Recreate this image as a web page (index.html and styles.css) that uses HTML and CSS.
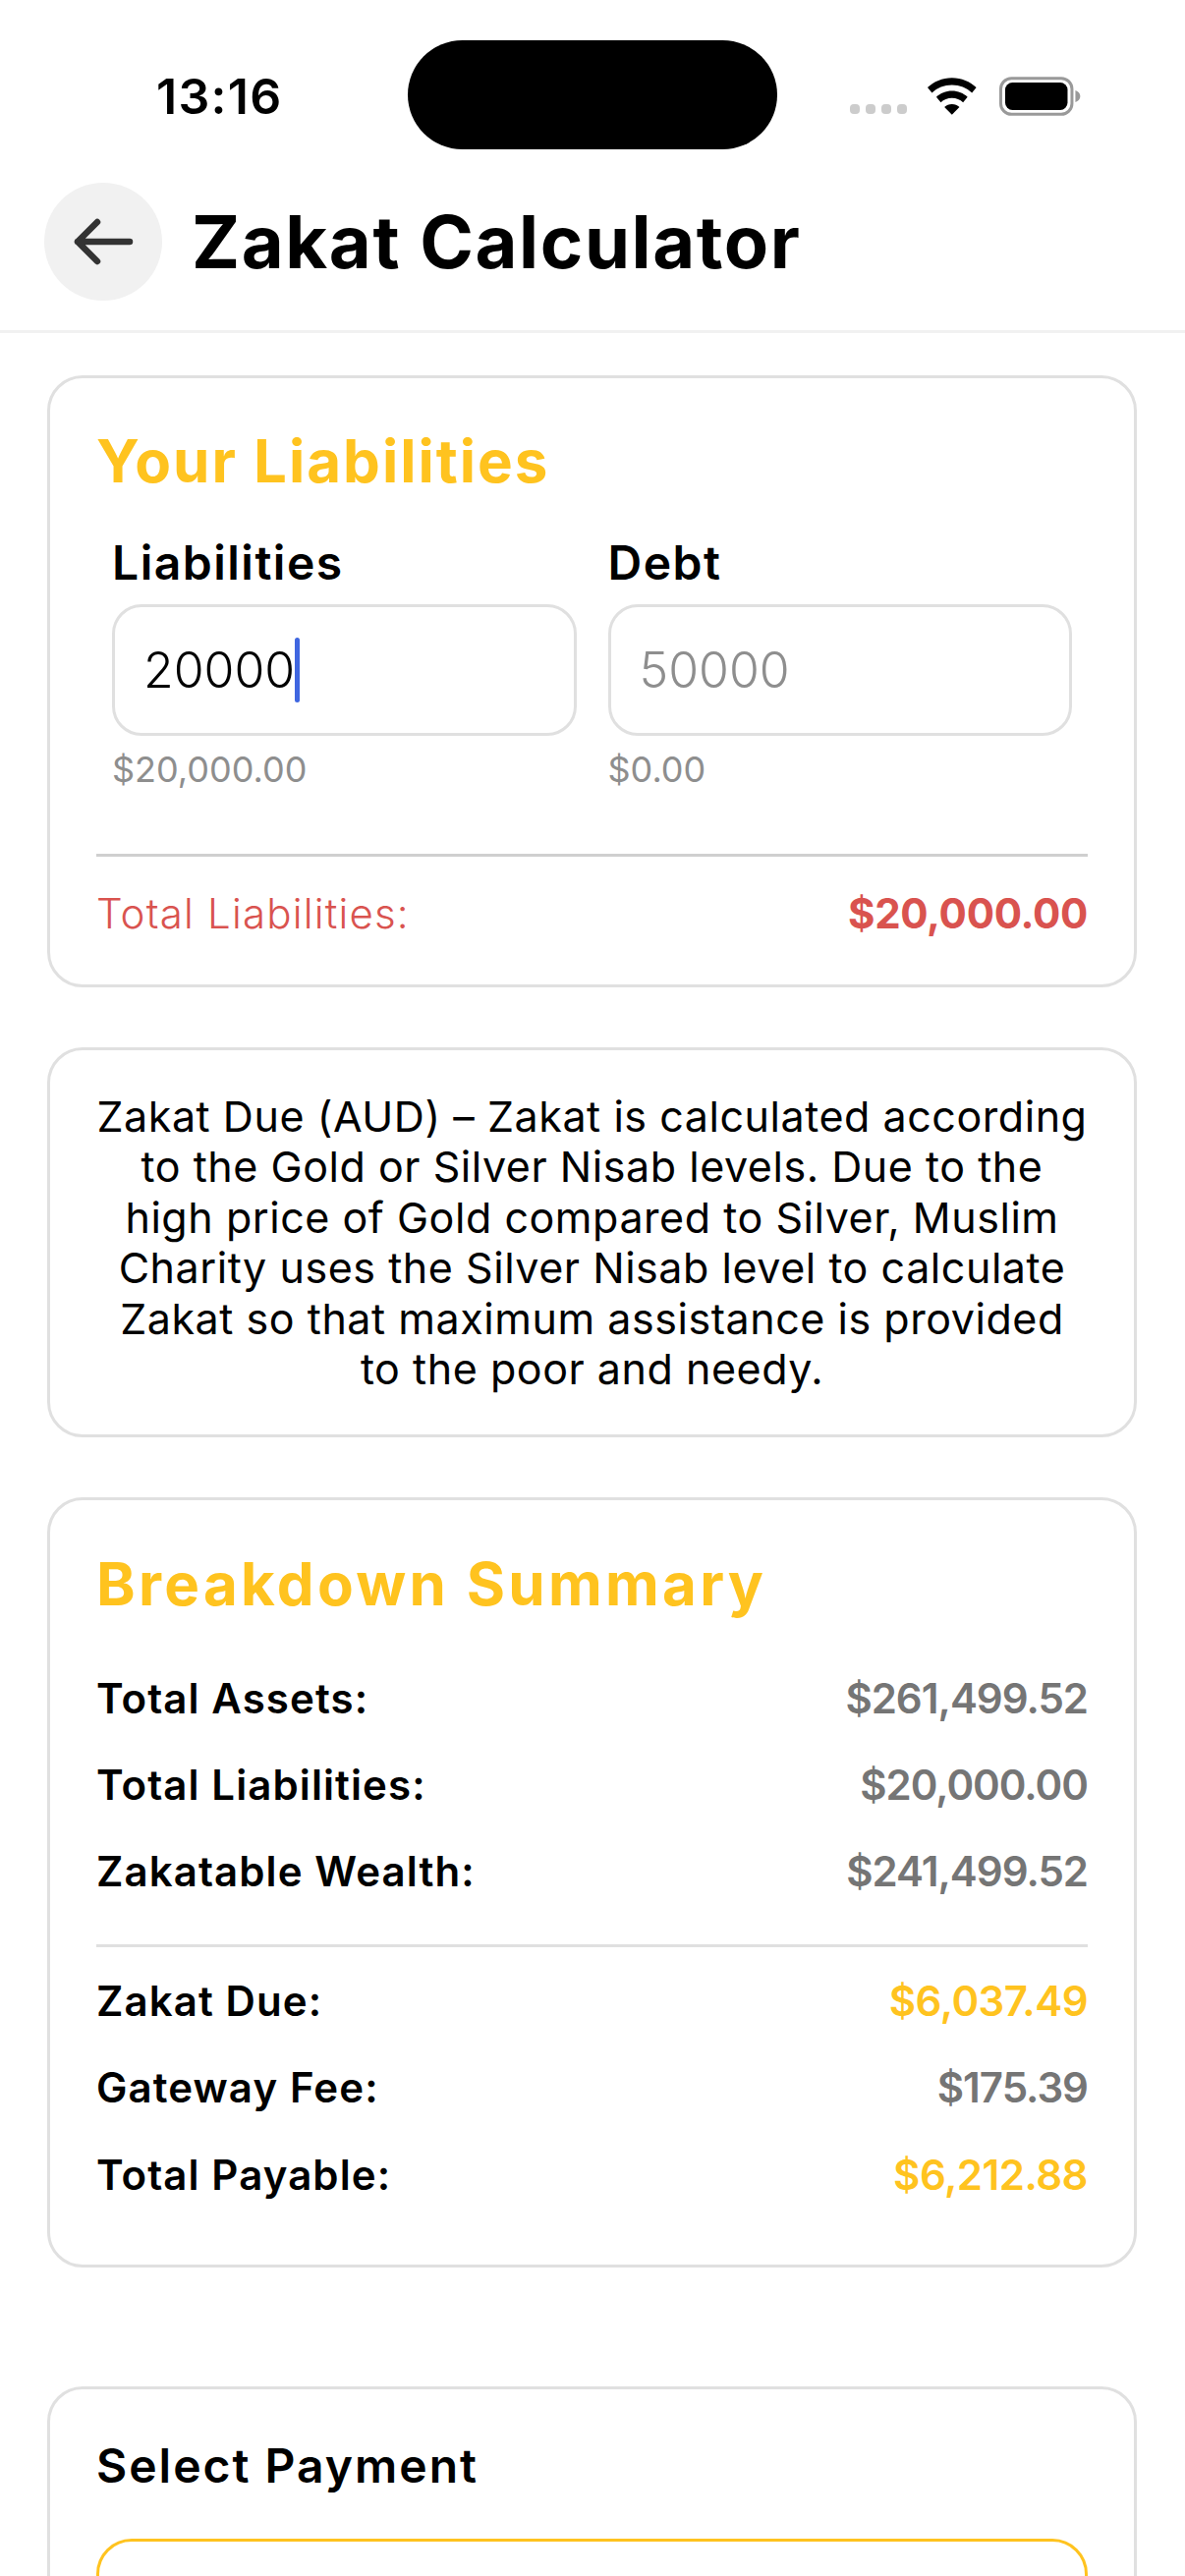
FILE: index.html
```html
<!DOCTYPE html>
<html lang="en">
<head>
  <meta charset="UTF-8">
  <meta name="viewport" content="width=device-width, initial-scale=1.0">
  <title>Zakat Calculator</title>
  <link rel="stylesheet" href="styles.css">
</head>
<body>

  <div class="status-bar">
    <span class="time">13:16</span>
    <div class="island"></div>
    <div class="status-icons">
      <div class="signal"><i></i><i></i><i></i><i></i></div>
      <svg class="wifi" width="52" height="38" viewBox="0 0 52 38">
        <path d="M26 0C16 0 7.500 3.800 1 10l4.500 5.500C11 10.400 18 7.500 26 7.500s15 2.900 20.500 8L51 10C44.500 3.800 36 0 26 0z" fill="#000"/>
        <path d="M26 13.500c-6.300 0-11.900 2.400-16 6.300l4.600 5.500c3-2.800 7-4.500 11.400-4.500s8.400 1.700 11.400 4.500l4.600-5.500c-4.100-3.900-9.700-6.300-16-6.300z" fill="#000"/>
        <path d="M26 27c-3 0-5.700 1.100-7.700 3L26 38l7.700-8c-2-1.900-4.700-3-7.700-3z" fill="#000"/>
      </svg>
      <svg class="battery" width="84" height="40" viewBox="0 0 84 40">
        <rect x="1.500" y="1.500" width="73" height="37" rx="11" fill="none" stroke="#999" stroke-width="3"/>
        <rect x="6" y="6" width="64" height="28" rx="7.500" fill="#000"/>
        <path d="M78 14c3 1 5 3 5 6s-2 5-5 6z" fill="#999"/>
      </svg>
    </div>
  </div>

  <div class="header">
    <div class="back-btn">
      <svg width="66" height="54" viewBox="0 0 66 54">
        <path d="M60 27H7M27 7L7 27l20 20" fill="none" stroke="#333" stroke-width="6.500" stroke-linecap="round" stroke-linejoin="round"/>
      </svg>
    </div>
    <h1 class="page-title">Zakat Calculator</h1>
  </div>

  <div class="content">

    <div class="card card-liabilities">
      <h2 class="card-title">Your Liabilities</h2>
      <div class="fields">
        <div class="field">
          <div class="field-label">Liabilities</div>
          <div class="input"><span>20000</span><span class="caret"></span></div>
          <div class="field-hint">$20,000.00</div>
        </div>
        <div class="field">
          <div class="field-label">Debt</div>
          <div class="input placeholder"><span>50000</span></div>
          <div class="field-hint">$0.00</div>
        </div>
      </div>
      <div class="total-row">
        <span class="total-label">Total Liabilities:</span>
        <span class="total-value">$20,000.00</span>
      </div>
    </div>

    <div class="card card-note">
      Zakat Due (AUD) – Zakat is calculated according<br>
      to the Gold or Silver Nisab levels. Due to the<br>
      high price of Gold compared to Silver, Muslim<br>
      Charity uses the Silver Nisab level to calculate<br>
      Zakat so that maximum assistance is provided<br>
      to the poor and needy.
    </div>

    <div class="card card-summary">
      <h2 class="card-title wide">Breakdown Summary</h2>
      <div class="summary-group first">
        <div class="summary-row"><span>Total Assets:</span><span class="amount">$261,499.52</span></div>
        <div class="summary-row"><span>Total Liabilities:</span><span class="amount">$20,000.00</span></div>
        <div class="summary-row"><span>Zakatable Wealth:</span><span class="amount">$241,499.52</span></div>
      </div>
      <div class="summary-group">
        <div class="summary-row"><span>Zakat Due:</span><span class="amount gold">$6,037.49</span></div>
        <div class="summary-row"><span>Gateway Fee:</span><span class="amount">$175.39</span></div>
        <div class="summary-row"><span>Total Payable:</span><span class="amount gold">$6,212.88</span></div>
      </div>
    </div>

    <div class="card card-payment">
      <h3 class="payment-title">Select Payment</h3>
      <div class="payment-option"></div>
    </div>

  </div>

</body>
</html>
```

FILE: styles.css
```css
html, body {
  height: 2622px;
  overflow: hidden;
}

body {
  margin: 0;
  background-color: #fff;
  color: #000;
  font-family: Inter, "Liberation Sans", sans-serif;
}

.status-bar {
  height: 186px;
  display: flex;
  padding: 41px 106px 0 159px;
  box-sizing: border-box;
}

.time {
  width: 256px;
  height: 111px;
  line-height: 114px;
  font-size: 50px;
  font-weight: 600;
  letter-spacing: 1.300px;
}

.island {
  width: 376px;
  height: 111px;
  background-color: #000;
  border-radius: 56px;
}

.status-icons {
  width: 235px;
  height: 76px;
  margin-left: auto;
  display: flex;
  align-items: flex-start;
  padding-top: 37px;
  box-sizing: border-box;
}

.signal {
  display: flex;
  gap: 6px;
  margin-top: 28px;
  margin-right: 20px;
}

.signal i {
  width: 10px;
  height: 10px;
  border-radius: 4px;
  background-color: #ccc;
}

.wifi {
  margin-right: 22px;
  margin-top: 1px;
}

.header {
  height: 153px;
  display: flex;
  align-items: flex-start;
  padding-left: 45px;
  border-bottom: 3px solid #f1f1f1;
  box-sizing: border-box;
}

.back-btn {
  width: 120px;
  height: 120px;
  border-radius: 50%;
  background-color: #f1f1f1;
  display: flex;
  align-items: center;
  justify-content: center;
  margin-right: 30px;
}

.page-title {
  margin: 0;
  font-size: 74px;
  line-height: 120px;
  font-weight: 700;
  letter-spacing: 1.600px;
}

.content {
  height: 2283px;
  overflow: hidden;
  padding: 43px 49px 0 48px;
  box-sizing: border-box;
  display: flex;
  flex-direction: column;
}

.card {
  flex-shrink: 0;
  border: 3px solid #e0e0e0;
  border-radius: 36px;
  box-sizing: border-box;
  padding: 0 47px;
}

.card-title {
  margin: 0;
  font-size: 60px;
  line-height: 72px;
  font-weight: 700;
  letter-spacing: 2px;
  color: #ffc31f;
}

.card-title.wide {
  letter-spacing: 3.300px;
}

.card-liabilities {
  height: 623px;
  padding-top: 48px;
}

.fields {
  display: flex;
  gap: 32px;
  padding: 0 16px;
  margin-top: 38px;
}

.field {
  flex: 1;
}

.field-label {
  font-size: 48px;
  line-height: 60px;
  font-weight: 600;
  letter-spacing: 1.500px;
  margin-bottom: 12px;
}

.input {
  height: 134px;
  border: 3px solid #e0e0e0;
  border-radius: 30px;
  box-sizing: border-box;
  display: flex;
  align-items: center;
  padding-left: 29px;
  font-size: 50px;
  font-weight: 300;
}

.placeholder {
  color: #8e8e8e;
}

.caret {
  width: 5px;
  height: 66px;
  border-radius: 3px;
  background-color: #3f66e0;
}

.field-hint {
  font-size: 36px;
  line-height: 44px;
  margin-top: 12px;
  color: #8e8e8e;
}

.total-row {
  display: flex;
  justify-content: space-between;
  align-items: center;
  border-top: 3px solid #cfcfcf;
  margin-top: 64px;
  padding-top: 30px;
  font-size: 42px;
  line-height: 56px;
  color: #d9534f;
}

.total-label {
  font-weight: 300;
  letter-spacing: 1.200px;
}

.total-value {
  font-weight: 700;
  letter-spacing: -0.300px;
}

.card-note {
  height: 397px;
  margin-top: 61px;
  padding-top: 42px;
  text-align: center;
  font-size: 43px;
  line-height: 51.400px;
  font-weight: 400;
  letter-spacing: 0.550px;
  white-space: nowrap;
}

.card-summary {
  height: 784px;
  margin-top: 61px;
  padding-top: 49px;
}

.summary-group {
  padding-top: 11px;
}

.summary-group.first {
  border-bottom: 3px solid #e0e0e0;
  padding-top: 36px;
  padding-bottom: 30px;
}

.summary-row {
  height: 88.200px;
  display: flex;
  justify-content: space-between;
  align-items: center;
  font-size: 42px;
  font-weight: 600;
  letter-spacing: 1.100px;
}

.amount {
  color: #757575;
  letter-spacing: -1px;
}

.amount.gold {
  color: #ffc31f;
  letter-spacing: -0.500px;
}

.card-payment {
  height: 300px;
  margin-top: 121px;
}

.payment-title {
  margin: 0;
  padding-top: 48px;
  font-size: 48px;
  line-height: 60px;
  font-weight: 600;
  letter-spacing: 2px;
}

.payment-option {
  height: 200px;
  margin-top: 44px;
  border: 3px solid #ffc31f;
  border-radius: 36px;
}
```
